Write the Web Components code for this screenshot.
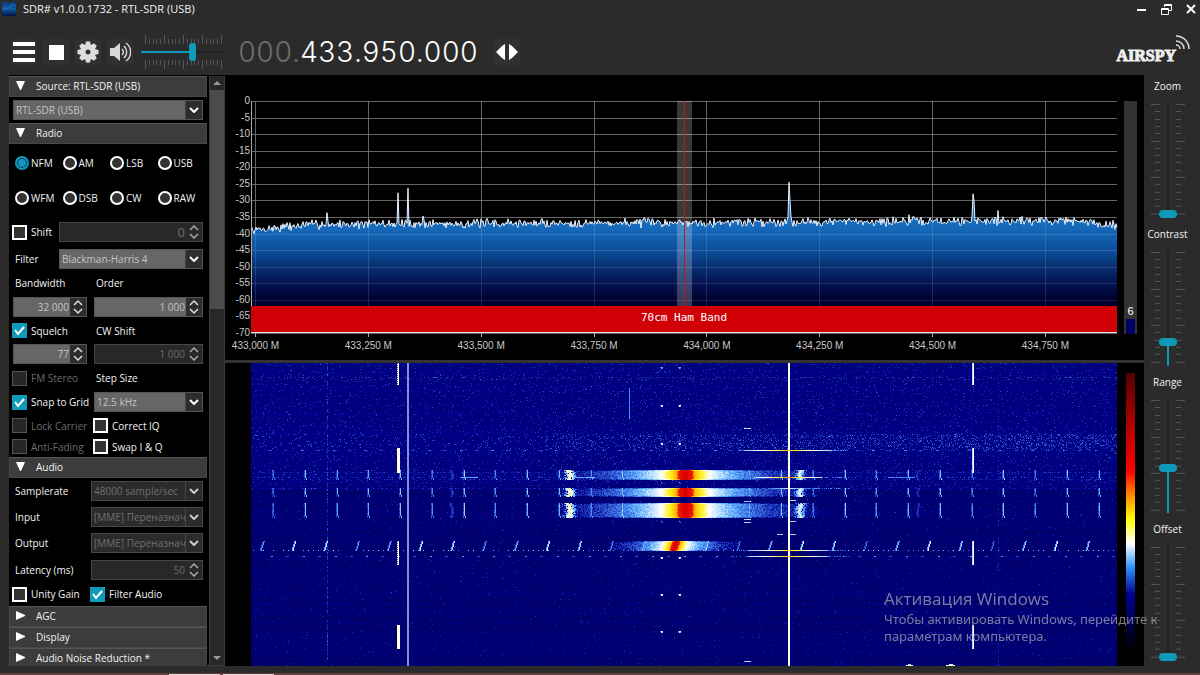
<!DOCTYPE html>
<html lang="ru">
<head>
<meta charset="utf-8">
<title>SDR# v1.0.0.1732 - RTL-SDR (USB)</title>
<style>
  html, body { margin: 0; height: 100%; }
  body { background: #2b2b2b; overflow: hidden; }
</style>
</head>
<body>
<sdr-app></sdr-app>

<template id="t-app">
  <style>
    :host {
      display: flex; flex-direction: column; height: 100vh; min-height: 480px; position: relative;
      font: 10px/14px "Open Sans", "Noto Sans", sans-serif; color: #f2f2f2; background: #2b2b2b;
      --accent: #0f9ab9;
    }
    main { flex: 1; min-height: 0; display: grid; grid-template-columns: 216px 1fr 56px; grid-template-rows: minmax(0, 1fr); padding-left: 9px; }
    .side { display: grid; grid-template-columns: 198px 16px; grid-template-rows: minmax(0, 1fr); column-gap: 2px; min-height: 0; background: #000; padding-top: 1px; box-sizing: border-box; border-bottom: 1px solid #3d3d3d; }
    .sections { display: flex; flex-direction: column; overflow: hidden; min-height: 0; }
    .two { display: grid; grid-template-columns: 74px 109px; column-gap: 7px; align-items: center; }
    .r20 { grid-auto-rows: 20px; }
    .lbl { grid-auto-rows: 28px; }
    .mid { grid-auto-rows: 27px; }
    .low { grid-auto-rows: 21px; padding-top: 3px; }
    .txt { padding-left: 2px; }
    .wide { display: grid; grid-template-columns: 46px 1fr; align-items: center; }
    .shift { padding: 7px 0; }
    .checks { display: grid; grid-template-columns: 78px 1fr; height: 24px; align-items: center; }
    .views { display: grid; grid-template-rows: minmax(0, 285fr) 3px minmax(0, 303fr); min-width: 0; min-height: 0; background: #000; }
    .split { background: #333; }
    .levels { display: flex; flex-direction: column; align-items: center; padding-right: 9px; min-height: 0; }
    .levels tick-slider { flex: 1 0 0; min-height: 0; }
    footer { display: flow-root; height: 9px; box-sizing: border-box; border-bottom: 2px solid #65403f; }
    footer i { display: block; height: 1px; margin: 8px 0 0 169px; width: 105px; background: linear-gradient(90deg, #e6d6d6 51px, #65403f 51px 54px, #e6d6d6 54px); }
    .mark { position: absolute; right: 50px; bottom: 30px; color: rgba(170,170,180,.72); font: 13px/17px "Noto Sans", "Open Sans", sans-serif; pointer-events: none; width: 266px; white-space: nowrap; }
    .mark strong { display: block; font: 400 17px/24px "Open Sans", "Noto Sans", sans-serif; }
    .mark span { display: block; }
  </style>
  <title-bar heading="SDR# v1.0.0.1732 - RTL-SDR (USB)"></title-bar>
  <tool-bar></tool-bar>
  <main>
    <aside class="side">
      <div class="sections">
        <side-section heading="Source: RTL-SDR (USB)" open>
          <drop-down name="Source device" value="RTL-SDR (USB)" style="margin:3px 0"></drop-down>
        </side-section>
        <side-section heading="Radio" open>
          <mode-picker></mode-picker>
          <div class="wide shift"><check-box label="Shift"></check-box><number-box name="Shift" value="0" off large></number-box></div>
          <drop-down label="Filter" labelwidth="46" value="Blackman-Harris 4"></drop-down>
          <div class="two">
            <number-box label="Bandwidth" value="32 000"></number-box>
            <number-box label="Order" value="1 000"></number-box>
          </div>
          <div class="two mid"><check-box label="Squelch" checked></check-box><span class="txt">CW Shift</span></div>
          <div class="two r20"><number-box name="Squelch level" value="77"></number-box><number-box name="CW Shift" value="1 000" off></number-box></div>
          <div class="two lbl"><check-box label="FM Stereo" off></check-box><span class="txt">Step Size</span></div>
          <div class="two r20"><check-box label="Snap to Grid" checked></check-box><drop-down name="Step Size" value="12.5 kHz"></drop-down></div>
          <div class="two low">
            <check-box label="Lock Carrier" off></check-box><check-box label="Correct IQ"></check-box>
            <check-box label="Anti-Fading" off></check-box><check-box label="Swap I &amp; Q"></check-box>
          </div>
        </side-section>
        <side-section heading="Audio" open>
          <div class="audio">
            <drop-down label="Samplerate" labelwidth="78" tall value="48000 sample/sec" off></drop-down>
            <drop-down label="Input" labelwidth="78" tall value="[MME] Переназнач" off></drop-down>
            <drop-down label="Output" labelwidth="78" tall value="[MME] Переназнач" off></drop-down>
            <number-box label="Latency (ms)" inline value="50" off></number-box>
            <div class="checks"><check-box label="Unity Gain"></check-box><check-box label="Filter Audio" checked></check-box></div>
          </div>
        </side-section>
        <side-section heading="AGC"></side-section>
        <side-section heading="Display"></side-section>
        <side-section heading="Audio Noise Reduction *"></side-section>
      </div>
      <scroll-rail></scroll-rail>
    </aside>
    <div class="views">
      <sdr-spectrum></sdr-spectrum>
      <div class="split"></div>
      <sdr-waterfall></sdr-waterfall>
    </div>
    <div class="levels">
      <tick-slider label="Zoom" value="0"></tick-slider>
      <tick-slider label="Contrast" value="18"></tick-slider>
      <tick-slider label="Range" value="38"></tick-slider>
      <tick-slider label="Offset" value="0"></tick-slider>
    </div>
  </main>
  <footer><i></i></footer>
  <div class="mark"><strong>Активация Windows</strong><span>Чтобы активировать Windows, перейдите к</span><span>параметрам компьютера.</span></div>
</template>

<template id="t-title">
  <style>
    :host { display: flex; align-items: center; height: 18px; padding: 0 3px 0 2px; gap: 7px; }
    h1 { flex: 1; margin: 0; font: inherit; font-size: 11px; }
    nav { display: flex; gap: 13px; align-items: center; }
    button { all: unset; display: block; width: 12px; height: 12px; }
    svg { display: block; }
  </style>
  <svg width="14" height="14" viewBox="0 0 14 14"><defs><linearGradient id="g" x2="0" y2="1"><stop stop-color="#0c3b78"/><stop offset=".5" stop-color="#0e5aa6"/><stop offset="1" stop-color="#03133f"/></linearGradient></defs><path fill="url(#g)" d="M0 0h14v14H0z"/><path d="M1 8c3-5 5 1 7-3s4-3 5-1" fill="none" stroke="#2f7dc4"/></svg>
  <h1></h1>
  <nav>
    <button aria-label="Minimize"><svg width="12" height="12"><path d="M2 7h9" stroke="#fff" stroke-width="2"/></svg></button>
    <button aria-label="Restore"><svg width="12" height="12" fill="none" stroke="#fff"><path d="M1.500 5.500h7v6h-7zM1 6.500h8M4.500 4V1.500h7v6H9M4 2.500h8"/></svg></button>
    <button aria-label="Close"><svg width="12" height="12"><path d="M2 2l8 8M10 2l-8 8" stroke="#fff" stroke-width="2"/></svg></button>
  </nav>
</template>

<template id="t-tool">
  <style>
    :host { display: flex; align-items: center; height: 57px; padding: 11px 10px 0 11px; box-sizing: border-box; }
    button { all: unset; width: 26px; height: 26px; display: grid; place-items: center; background: #313131; margin-right: 6px; }
    svg { display: block; }
    tick-slider { width: 83px; margin: 0 14px 0 2px; }
    output { font: 300 28px/32px Inter, "Open Sans", sans-serif; font-variant-numeric: tabular-nums; color: #fff; white-space: pre; margin-right: 16px; }
    output span { color: #6e6e6e; }
    .logo { margin-left: auto; display: flex; align-items: flex-end; height: 26px; padding-bottom: 8px; }
    .logo b { font: 700 16px/16px "Liberation Serif", serif; color: #eee; -webkit-text-stroke: 1px #eee; margin-bottom: -3px; }
  </style>
  <button aria-label="Menu"><svg width="22" height="20"><path d="M0 2h22M0 10h22M0 18h22" stroke="#fff" stroke-width="4"/></svg></button>
  <button aria-label="Stop"><svg width="15" height="15"><path d="M0 0h15v15H0z" fill="#fff"/></svg></button>
  <button aria-label="Settings"><svg width="22" height="22" viewBox="-11 -11 22 22" fill="#dedede"><g id="teeth"><path id="t" d="M-2-10.500h4l1 4h-6z"/></g><path fill-rule="evenodd" d="M0-7.500a7.500 7.500 0 1 1 0 15a7.500 7.500 0 1 1 0-15zM0-2.500a2.500 2.500 0 1 0 0 5a2.500 2.500 0 1 0 0-5z"/></svg></button>
  <button aria-label="Mute"><svg width="22" height="20" fill="none" stroke="#d8d8d8" stroke-width="1.500"><path d="M1 6h4l6-5v18l-6-5H1z" fill="#d8d8d8" stroke="none"/><path d="M13 7a4 4 0 0 1 0 6M15 4a8 8 0 0 1 0 12M17 1a11 11 0 0 1 0 18"/></svg></button>
  <tick-slider horizontal name="Volume" value="63"></tick-slider>
  <output><span>000.</span>433.950.000</output>
  <button aria-label="Tuning style"><svg width="22" height="16" fill="#fff"><path d="M9 0v16l-3-2-6-6 6-6zM13 0v16l3-2 6-6-6-6z"/></svg></button>
  <div class="logo"><b>AIRSPY</b><svg width="14" height="26" fill="none" stroke="#ddd" stroke-width="1.500"><path d="M0 1a13 13 0 0 1 13 13M0 6a8 8 0 0 1 8 8M0 10a4 4 0 0 1 4 4"/></svg></div>
</template>

<template id="t-section">
  <style>
    :host { display: block; flex: none; }
    button { all: unset; display: flex; align-items: center; box-sizing: border-box; width: 100%; height: 21px; background: #3c3c3c; border: 1px solid #484848; border-top-color: #555; padding: 0 0 2px 5px; }
    svg { display: block; width: 11px; height: 11px; fill: #fff; margin-right: 10px; }
    .body { padding: 0 4px; }
    .body[hidden] { display: none; }
  </style>
  <button><svg viewBox="0 0 11 11"><path/></svg><span></span></button>
  <div class="body"><slot></slot></div>
</template>

<template id="t-modes">
  <style>
    :host { display: block; padding-top: 1px; }
    fieldset { all: unset; display: grid; grid-template-columns: repeat(4, 1fr); grid-auto-rows: 35px; align-items: center; }
    label { display: flex; align-items: center; gap: 2px; padding-left: 2px; }
    input { appearance: none; box-sizing: border-box; width: 14px; height: 14px; margin: 0; border: 2px solid #fff; border-radius: 50%; background: #333; flex: none; }
    input:checked { border: 2px solid var(--accent); background: var(--accent); box-shadow: inset 0 0 0 1px #125; }
  </style>
  <fieldset aria-label="Mode"></fieldset>
</template>

<template id="t-check">
  <style>
    :host { display: block; margin-left: -1px; }
    label { display: flex; align-items: center; gap: 4px; white-space: nowrap; }
    .b { display: grid; flex: none; }
    input { grid-area: 1/1; appearance: none; box-sizing: border-box; width: 15px; height: 15px; margin: 0; border: 2px solid #fff; background: #333; }
    input:checked { border: 0; background: var(--accent); }
    input:disabled { border: 1px solid #555; background: #262626; }
    svg { grid-area: 1/1; width: 15px; height: 15px; fill: none; stroke: #fff; stroke-width: 2; pointer-events: none; visibility: hidden; }
    input:checked + svg { visibility: visible; }
    :host([off]) span { color: #6c6c6c; }
  </style>
  <label><span class="b"><input type="checkbox"><svg viewBox="0 0 15 15"><path d="M3 7l3 4 6-7"/></svg></span><span class="c"></span></label>
</template>

<template id="t-drop">
  <style>
    :host { display: block; }
    label { display: flex; align-items: center; height: 20px; }
    :host([tall]) label { height: 26px; }
    .name { box-sizing: border-box; padding-left: 2px; flex: none; }
    .box { display: grid; flex: 1; min-width: 0; align-items: center; }
    select { grid-area: 1/1; appearance: none; box-sizing: border-box; min-width: 0; width: 100%; height: 20px; margin: 0; padding: 0 17px 0 2px; border: 1px solid #555; border-radius: 0; font: inherit; line-height: 18px; color: #c4c4c4; background: linear-gradient(270deg, #2d2d2d 16px, #444 16px 17px, #666 17px); opacity: 1; }
    :host([off]) select { color: #707070; background: linear-gradient(270deg, #2b2b2b 16px, #484848 16px 17px, #2b2b2b 17px); border-color: #484848; }
    svg { grid-area: 1/1; justify-self: end; margin-right: 4px; width: 10px; height: 6px; fill: none; stroke: #fff; stroke-width: 2; pointer-events: none; }
    :host([off]) svg { stroke: #ccc; }
  </style>
  <label><span class="name"></span><span class="box"><select><option></option></select><svg viewBox="0 0 10 6"><path d="M1 1l4 4 4-4"/></svg></span></label>
</template>

<template id="t-number">
  <style>
    :host { display: block; }
    .name { display: block; height: 28px; line-height: 28px; padding-left: 2px; }
    .name:empty { display: none; }
    .box { display: grid; }
    :host([inline]) label { display: grid; grid-template-columns: 78px 1fr; align-items: center; height: 26px; }
    input { grid-area: 1/1; box-sizing: border-box; min-width: 0; width: 100%; height: 20px; margin: 0; padding: 0 17px 0 4px; border: 1px solid #555; font: inherit; text-align: right; color: #c4c4c4; background: linear-gradient(270deg, #2d2d2d 16px, #666 16px); }
    :host([off]) input { color: #6c6c6c; background: #282828; border-color: #484848; }
    :host([large]) input { font-size: 13px; }
    svg { grid-area: 1/1; justify-self: end; align-self: center; margin-right: 4px; width: 10px; height: 16px; fill: none; stroke: #ddd; stroke-width: 1.500; pointer-events: none; }
    :host([off]) svg { stroke: #aaa; }
  </style>
  <label><span class="name"></span><span class="box"><input type="text" inputmode="numeric"><svg viewBox="0 0 10 16"><path d="M1 6l4-4 4 4M1 10l4 4 4-4"/></svg></span></label>
</template>

<template id="t-rail">
  <style>
    :host { display: flex; flex-direction: column; background: #282828; border: solid #3a3a3a; border-width: 0 1px; box-sizing: border-box; }
    svg { display: block; height: 14px; width: 14px; fill: #999; flex: none; }
    .track { flex: 1; }
    .thumb { height: 39%; background: #4b4b4b; }
  </style>
  <svg viewBox="0 0 14 14"><path d="M3 9l4-4 4 4z"/></svg>
  <div class="track"><div class="thumb"></div></div>
  <svg viewBox="0 0 14 14"><path d="M3 5l4 4 4-4z"/></svg>
</template>

<template id="t-slider">
  <style>
    :host { display: flex; flex-direction: column; align-items: center; --v: 0%; }
    label { display: block; height: 22px; line-height: 22px; }
    .box { flex: 1 0 0; min-height: 0; display: grid; grid-template-rows: minmax(0, 1fr); margin: 4px 0 5px; width: 34px; justify-items: center; }
    svg { grid-area: 1/1; width: 100%; height: 100%; stroke: #565656; overflow: hidden; }
    input { grid-area: 1/1; appearance: none; writing-mode: vertical-lr; direction: rtl; width: 18px; height: 100%; min-height: 0; margin: 0; background: linear-gradient(0deg, var(--accent) var(--v), #222 var(--v)) center/2px 100% no-repeat; }
    input::-webkit-slider-runnable-track { background: none; }
    input::-webkit-slider-thumb { appearance: none; width: 18px; height: 8px; border-radius: 4px; background: var(--accent); }
    :host([horizontal]) { display: block; }
    :host([horizontal]) .box { width: 100%; height: 34px; margin: 0; align-items: center; }
    :host([horizontal]) input { writing-mode: horizontal-tb; direction: ltr; width: 100%; height: 18px; background: linear-gradient(90deg, var(--accent) var(--v), #222 var(--v)) center/100% 2px no-repeat; }
    :host([horizontal]) input::-webkit-slider-thumb { width: 7px; height: 18px; border-radius: 3px; }
  </style>
  <label for="r"></label>
  <div class="box"><svg preserveAspectRatio="none"></svg><input id="r" type="range" min="0" max="100"></div>
</template>

<template id="t-spectrum">
  <style>
    :host { display: grid; grid-template-columns: 26px 1fr 27px; grid-template-rows: minmax(0, 1fr) 27px; padding-top: 26px; box-sizing: border-box; font: 10px/12px "Liberation Sans", Arial, sans-serif; color: #c8c8c8; }
    .y { display: flex; flex-direction: column; justify-content: space-between; text-align: right; margin: -6px 1px -6px 0; }
    .plot { display: grid; min-height: 0; min-width: 0; grid-template-rows: 100%; }
    svg { grid-area: 1/1; width: 100%; height: 100%; display: block; overflow: visible; }
    .band { grid-area: 1/1; align-self: end; height: 27px; background: #d00006; border-bottom: 1px solid #ddd; box-sizing: border-box; color: #fff; text-align: center; font: 11px/24px "DejaVu Sans Mono", monospace; }
    .x { grid-column: 2; display: grid; grid-template-columns: repeat(8, 1fr); min-width: 0; padding-top: 7px; margin: 0 -2% 0 -6%; width: 104.250%; }
    .x span { text-align: center; white-space: nowrap; }
    .m { margin: 0 7px; background: #333; display: flex; flex-direction: column; justify-content: flex-end; text-align: center; color: #fff; font: 11px/14px "Liberation Sans", sans-serif; margin-bottom: -1px; }
    .m i { height: 15px; margin: 1px 2px 0; background: #000064; }
  </style>
  <div class="y"></div>
  <div class="plot"><svg viewBox="0 0 866 232" preserveAspectRatio="none"></svg><div class="band">70cm Ham Band</div></div>
  <div class="m"><span>6</span><i></i></div>
  <div class="x"></div>
</template>

<template id="t-waterfall">
  <style>
    :host { display: grid; grid-template-columns: 1fr 27px; grid-template-rows: minmax(0, 1fr); padding-left: 26px; background: #000; }
    canvas { display: block; width: 100%; height: 100%; min-height: 0; min-width: 0; }
    .scale { margin: 10px 9px 13px; background: linear-gradient(#500000, #900000 12%, #ff0000 35%, #ff8000 43%, #ffff00 52%, #fff 61%, #3399ff 69%, #000091 79%, #000050 88%, #000); }
  </style>
  <canvas width="866" height="303"></canvas>
  <div class="scale"></div>
</template>

<script>
const T = Math.round;
// Registers an element whose shadow root is cloned from a template.
function define(name, tpl, setup) {
  customElements.define(name, class extends HTMLElement {
    connectedCallback() {
      if (this.shadowRoot) return;
      const root = this.attachShadow({ mode: 'open' });
      root.append(document.getElementById(tpl).content.cloneNode(true));
      if (setup) setup.call(this, root, s => root.querySelector(s), a => this.getAttribute(a));
    }
  });
}
// Seeded generator, so the noise is the same on every load.
function random(seed) {
  return () => { seed = (seed * 1664525 + 1013904223) >>> 0; return seed / 4294967296; };
}

define('title-bar', 't-title', function (r, $, a) { $('h1').textContent = a('heading'); });

define('tool-bar', 't-tool', function (r, $) {
  const g = $('#teeth'), t = $('#t');
  for (let i = 1; i < 8; i++) {
    const c = t.cloneNode(); c.removeAttribute('id');
    c.setAttribute('transform', `rotate(${i * 45})`); g.append(c);
  }
});

define('side-section', 't-section', function (r, $, a) {
  const show = () => {
    const open = this.hasAttribute('open');
    $('.body').hidden = !open;
    $('button').setAttribute('aria-expanded', open);
    $('path').setAttribute('d', open ? 'M1 1h9l-4 9h-1z' : 'M1 1l9 4v1l-9 4z');
  };
  $('span').textContent = a('heading');
  $('button').onclick = () => { this.toggleAttribute('open'); show(); };
  show();
});

define('mode-picker', 't-modes', function (r, $) {
  $('fieldset').innerHTML = ['NFM', 'AM', 'LSB', 'USB', 'WFM', 'DSB', 'CW', 'RAW'].map((m, i) =>
    `<label><input type="radio" name="mode"${i ? '' : ' checked'}><span>${m}</span></label>`).join('');
});

define('check-box', 't-check', function (r, $, a) {
  $('.c').textContent = a('label');
  $('input').checked = this.hasAttribute('checked');
  $('input').disabled = this.hasAttribute('off');
});

define('drop-down', 't-drop', function (r, $, a) {
  $('option').textContent = a('value');
  $('select').disabled = this.hasAttribute('off');
  if (a('label')) { $('.name').textContent = a('label'); $('.name').style.width = a('labelwidth') + 'px'; }
  else { $('.name').remove(); $('select').setAttribute('aria-label', a('name')); }
});

define('number-box', 't-number', function (r, $, a) {
  $('input').value = a('value');
  $('input').disabled = this.hasAttribute('off');
  if (a('label')) $('.name').textContent = a('label');
  else $('input').setAttribute('aria-label', a('name'));
});

define('scroll-rail', 't-rail');

define('tick-slider', 't-slider', function (r, $, a) {
  const flat = this.hasAttribute('horizontal'), input = $('input');
  let d = '';
  if (flat) {
    $('svg').setAttribute('viewBox', '0 0 83 34');
    for (let i = 0; i <= 20; i++) {
      const x = 4.5 + T(i * 3.8), l = i % 5 ? 5 : 9;
      d += `M${x} ${9 - l}V9M${x} 25v${l}`;
    }
    input.setAttribute('aria-label', a('name')); $('label').remove();
  } else {
    $('svg').setAttribute('viewBox', '0 0 34 117');
    for (let i = 0; i <= 15; i++) {
      const y = 3.5 + T(i * 7.3), l = i % 5 ? 5 : 9;
      d += `M${9 - l} ${y}H9M25 ${y}h${l}`;
    }
    $('label').textContent = a('label');
  }
  $('svg').innerHTML = `<path d="${d}"/>`;
  input.value = a('value');
  const sync = () => this.style.setProperty('--v', input.value + '%');
  input.oninput = sync; sync();
});

define('sdr-spectrum', 't-spectrum', function (r, $) {
  const H = 232, perDb = H / 70, rnd = random(7);
  for (let i = 0; i <= 14; i++) $('.y').append(Object.assign(document.createElement('span'), { textContent: String(-5 * i) }));
  for (let i = 0; i < 8; i++) {
    const k = 433000 + i * 250;
    $('.x').append(Object.assign(document.createElement('span'), { textContent: `${Math.floor(k / 1000)},${String(k % 1000).padStart(3, '0')} M` }));
  }
  const spikes = { 76: -33.700, 147: -27.700, 157: -26.300, 172: -34.700, 538: -24.500, 658: -34.300, 722: -28, 747: -33, 795: -35 };
  let line = '';
  for (let x = 0; x <= 866; x++) {
    let base = -37.300 + x / 866 * 1.300;
    if (x < 60) base -= (60 - x) / 60 * 1.800;
    if (x > 820) base -= (x - 820) / 46 * 1.500;
    let db = base + (rnd() + rnd() - 1) * 1.700;
    if (spikes[x]) db = spikes[x];
    else if (x === 539 || x === 723) db = -30;
    else if (x === 540 || x === 721 || x === 537) db = -35;
    line += `${x ? 'L' : 'M'}${x} ${(-db * perDb).toFixed(1)}`;
  }
  let h = '', v = '', ticks = '';
  for (let i = 0; i <= 14; i++) h += `M0 ${T(i * 5 * perDb) + .5}H866`;
  for (let i = 0; i < 8; i++) { const x = T(4 + i * 112.850) + .5; v += `M${x} 0V232`; ticks += `M${x} 232v4`; }
  $('svg').innerHTML = `
    <defs><linearGradient id="f" gradientUnits="userSpaceOnUse" x1="0" x2="0" y1="115" y2="200">
      <stop stop-color="#1a70c0"/><stop offset=".2" stop-color="#1464b4"/><stop offset=".42" stop-color="#0d4c98"/><stop offset=".6" stop-color="#082f70"/><stop offset=".8" stop-color="#031250"/><stop offset="1" stop-color="#00002c"/></linearGradient></defs>
    <path d="${h}${v}" stroke="#505050" fill="none"/>
    <path d="${line}V232H0z" fill="url(#f)"/>
    <path d="${h}${v}" stroke="#fff" stroke-opacity=".13" fill="none"/>
    <path d="${line}" stroke="#e8f0ff" fill="none"/>
    <path d="M426 0h15v206h-15z" fill="#fff" fill-opacity=".22"/>
    <path d="M433.500 0V206" stroke="#c01818"/>
    <path d="M.5 0V232" stroke="#aaa"/><path d="${ticks}" stroke="#aaa"/>`;
});

define('sdr-waterfall', 't-waterfall', function (r, $) {
  const W = 866, H = 303, X0 = 251, Y0 = 363, rnd = random(42);
  const level = new Float32Array(W * H);
  // Feature positions below are in window pixels; put() keeps the strongest level.
  const put = (x, y, v) => {
    x = T(x) - X0; y = T(y) - Y0;
    if (x >= 0 && y >= 0 && x < W && y < H) level[y * W + x] = Math.max(level[y * W + x], v);
  };
  const vbar = (x, y0, y1, v, w = 1, j = 0) => { for (let y = y0; y < y1; y++) for (let i = 0; i < w; i++) put(x + i, y, v - rnd() * j); };
  const hbar = (x0, x1, y, v, j = 0) => { for (let x = x0; x < x1; x++) put(x, y, v - rnd() * j); };

  // Noise floor: per-row level plus sparse speckles.
  for (let y = 0; y < H; y++) {
    const top = y < 127, band = y > 70 && y < 87, row = (top ? .185 : .165) + (rnd() - .5) * .018;
    for (let x = 0; x < W; x++) {
      let v = row + (rnd() - .5) * .03;
      let p = top ? .07 : .02;
      if (band) p = x > 290 ? .12 + x / 4500 : .08;
      if (y === 14 || y === 16) p = .4;
      if (y === 125) p = .2;
      if (rnd() < p) v += .02 + rnd() * (band || y === 14 ? .13 : .08);
      level[y * W + x] = v;
    }
  }
  // Continuous carriers.
  for (let y = Y0; y < Y0 + H; y++) {
    put(788, y, .58); put(789, y, .58);
    if (rnd() < .6) put(327, y, .2 + rnd() * .12);
    if (rnd() < .35) put(998, y, .2 + rnd() * .08);
  }
  // Keyed carriers.
  [[363, 385, 1], [448, 473, 0], [541, 565, 1], [625, 649, 0]].forEach(([a, b, dotted]) => {
    for (let y = a; y < b; y++) {
      put(397, y, dotted && y % 2 ? .3 : .6); put(398, y, .58); if (!dotted) put(399, y, .58);
      put(973, y, .57); put(972, y, .5);
    }
  });
  vbar(629, 388, 419, .38);
  vbar(955, 385, 420, .26, 1, .1);
  // Comb of weak pulses beside every burst.
  const bursts = [[470, 480], [488, 497], [503, 518]];
  for (let k = 0; k < 27; k++) {
    const x = 273 + k * 31.750, s = .29 + .14 * Math.abs(Math.sin(k * 1.300));
    bursts.forEach(([a, b]) => { for (let y = a; y < b; y++) { put(x + (y > b - 3 && b - a < 20 ? 1 : 0), y, s + rnd() * .08); put(x - 1, y, .22 + rnd() * .12); } });
    const d = 262 + k * 31.750, q = .32 + .22 * Math.abs(Math.sin(k * .8 + .4));
    for (let y = 541; y < 551; y++) { const o = (546 - y) * .3; put(d + o, y, q); put(d + o - 1, y, q * .75); }
    hbar(T(269 + k * 31.750), T(272 + k * 31.750), 450, .42, .15);
    hbar(T(284 + k * 31.750), T(288 + k * 31.750), 450, .33, .1);
    hbar(T(271 + k * 31.750), T(273 + k * 31.750), 556, .4);
    hbar(T(286 + k * 31.750), T(289 + k * 31.750), 556, .3);
  }
  for (let x = 253; x < 1117; x += 5) if (rnd() < .8) put(x, 550, .33 + rnd() * .2);
  for (let x = 251; x < 1117; x++) {
    if (rnd() < .4) put(x, 472, .2 + rnd() * .08);
    if (rnd() < .35) put(x, 477, .2 + rnd() * .12);
    if (rnd() < .3) put(x, 479, .2 + rnd() * .1);
  }
  // Main bursts: a hot core that falls off to both sides.
  const burst = (cx, y0, y1, k, tilt) => {
    const pts = [[0, 1], [4, .84], [7, .78], [9, .7], [17, .65], [24, .57], [36, .5], [55, .38], [85, .27], [125, .2], [150, 0]];
    for (let y = y0; y < y1; y++) for (let x = cx - 150; x <= cx + 150; x++) {
      const edge = y === y0 || y === y1 - 1;
      const d = Math.abs(x - cx + (y - y0) * tilt) / k * (edge ? 1.300 : 1) * (1 + (rnd() - .5) * .15);
      let i = 1; while (i < pts.length - 1 && pts[i][0] < d) i++;
      const [a, va] = pts[i - 1], [b, vb] = pts[i];
      if (d < 150) put(x, y, va + (vb - va) * (d - a) / (b - a) + (d > 35 ? (rnd() - .5) * .1 : 0));
    }
  };
  bursts.forEach(([a, b]) => burst(685, a, b, 1, 0));
  burst(676, 541, 551, .5, .35);
  // Mirror images of the bursts.
  const blob = (cx, y0, y1, v, dir) => {
    for (let y = y0; y < y1; y++) for (let x = -7; x <= 7; x++) {
      const bend = dir * Math.sin((y - y0) / (y1 - y0) * 3) * 2;
      if (rnd() < 1.1 - Math.abs(x) / 8) put(cx + x + bend, y, v - Math.abs(x) * .045 - rnd() * .07);
    }
  };
  bursts.forEach(([a, b]) => { blob(568, a, b, .66, 1); blob(801, a, b, .6, -1); blob(450, a, b, .32, 1); blob(919, a, b, .3, -1); });
  // Splatter lines around the strong carrier.
  [[450, .7, 44], [477, .72, 34], [550, .68, 40], [556, .7, 40], [488, .54, 20]].forEach(([y, v, w]) => {
    for (let x = 788 - w; x < 788 + w; x++) put(x, y, v - Math.abs(x - 788) / w * .22);
    for (let x = 735; x < 850; x++) if (rnd() < .5) put(x, y, .3 + rnd() * .1);
  });
  [367, 405, 443, 557, 594, 631].forEach(y => [661, 679].forEach(x => {
    const v = y === 367 ? .42 : .56; put(x, y, v); put(x + 1, y, v); put(x, y + 1, v); put(x + 1, y + 1, v - .1); put(x - 1, y, .35);
  }));
  [482, 521].forEach(y => [661, 679].forEach(x => { put(x, y, .42); put(x + 1, y + 1, .36); }));
  [428, 501, 519, 522, 661].forEach(y => hbar(744, 751, y, .55, .1));
  [500, 521, 534].forEach(y => hbar(790, 796, y, .55, .08));
  hbar(777, 783, 534, .5);
  hbar(572, 595, 477, .48, .1); hbar(460, 478, 477, .46, .1); hbar(888, 915, 477, .42, .1);
  hbar(906, 913, 665, .62, .1); hbar(946, 955, 665, .62, .1); hbar(908, 911, 664, .5); hbar(949, 953, 664, .55);

  // Level to colour.
  const map = [[0, 0, 0, 0], [.12, 0, 0, 80], [.2, 0, 0, 140], [.3, 45, 80, 205], [.4, 80, 160, 250], [.5, 170, 215, 255], [.57, 255, 255, 255], [.66, 255, 240, 30], [.72, 255, 150, 0], [.79, 235, 20, 0], [1, 215, 0, 0]];
  const ctx = $('canvas').getContext('2d'), img = ctx.createImageData(W, H);
  for (let i = 0; i < W * H; i++) {
    const v = Math.min(1, Math.max(0, level[i]));
    let k = 1; while (map[k][0] < v) k++;
    const a = map[k - 1], b = map[k], t = (v - a[0]) / (b[0] - a[0]);
    for (let c = 0; c < 3; c++) img.data[i * 4 + c] = a[c + 1] + (b[c + 1] - a[c + 1]) * t;
    img.data[i * 4 + 3] = 255;
  }
  ctx.putImageData(img, 0, 0);
  // The steady carrier left of centre is a pale violet line.
  ctx.fillStyle = '#8090e0';
  ctx.fillRect(407 - X0, 0, 2, H);
});

define('sdr-app', 't-app');
</script>
</body>
</html>
